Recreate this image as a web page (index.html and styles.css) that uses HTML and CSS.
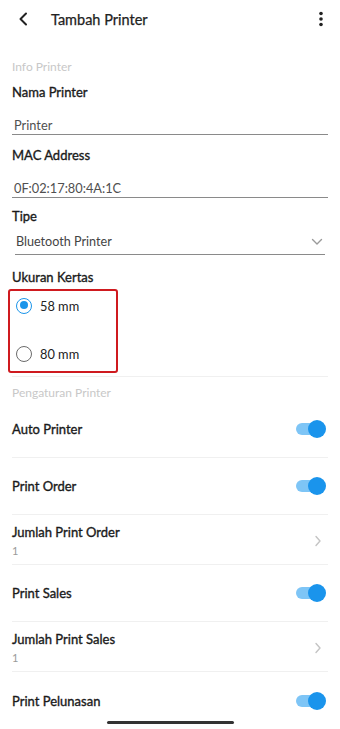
FILE: index.html
```html
<!DOCTYPE html>
<html lang="id">
<head>
<meta charset="utf-8">
<link rel="stylesheet" href="styles.css">
</head>
<body>
<div class="screen">
  <header class="appbar">
    <svg class="back" width="12" height="14" viewBox="0 0 12 14"><path d="M8 1.5 L2.5 7 L8 12.5" fill="none" stroke="#222" stroke-width="2" stroke-linecap="round" stroke-linejoin="round"/></svg>
    <div class="title">Tambah Printer</div>
    <svg class="kebab" width="6" height="16" viewBox="0 0 6 16"><circle cx="3" cy="2.5" r="1.8" fill="#222"/><circle cx="3" cy="8" r="1.8" fill="#222"/><circle cx="3" cy="13.5" r="1.8" fill="#222"/></svg>
  </header>

  <main class="content">
    <div class="section-title first">Info Printer</div>

    <div class="field">
      <div class="label">Nama Printer</div>
      <div class="input">Printer</div>
    </div>
    <div class="field">
      <div class="label label-mac">MAC Address</div>
      <div class="input">0F:02:17:80:4A:1C</div>
    </div>
    <div class="field">
      <div class="label label-tipe">Tipe</div>
      <div class="select">
        <span>Bluetooth Printer</span>
        <svg width="12" height="8" viewBox="0 0 12 8"><path d="M1.5 1.5 L6 6 L10.5 1.5" fill="none" stroke="#9a9a9a" stroke-width="1.4" stroke-linecap="round" stroke-linejoin="round"/></svg>
      </div>
    </div>

    <div class="label label-paper">Ukuran Kertas</div>
    <div class="radio-box">
      <div class="radio on"><span class="dot"></span><span>58 mm</span></div>
      <div class="radio"><span class="dot"></span><span>80 mm</span></div>
    </div>

    <div class="divider"></div>
    <div class="section-title second">Pengaturan Printer</div>

    <div class="row toggle-row"><span class="row-title">Auto Printer</span><span class="switch"></span></div>
    <div class="row toggle-row"><span class="row-title">Print Order</span><span class="switch"></span></div>
    <div class="row nav-row">
      <div class="nav-text"><span class="row-title">Jumlah Print Order</span><span class="sub">1</span></div>
      <svg width="8" height="12" viewBox="0 0 8 12"><path d="M2 1.5 L6 6 L2 10.5" fill="none" stroke="#c4c4c4" stroke-width="1.4" stroke-linecap="round" stroke-linejoin="round"/></svg>
    </div>
    <div class="row toggle-row"><span class="row-title">Print Sales</span><span class="switch"></span></div>
    <div class="row nav-row">
      <div class="nav-text"><span class="row-title">Jumlah Print Sales</span><span class="sub">1</span></div>
      <svg width="8" height="12" viewBox="0 0 8 12"><path d="M2 1.5 L6 6 L2 10.5" fill="none" stroke="#c4c4c4" stroke-width="1.4" stroke-linecap="round" stroke-linejoin="round"/></svg>
    </div>
    <div class="row toggle-row last"><span class="row-title">Print Pelunasan</span><span class="switch"></span></div>
  </main>
  <div class="home-indicator"></div>
</div>
</body>
</html>
```

FILE: styles.css
```css
* { box-sizing: border-box; }
html, body { margin: 0; padding: 0; background: #fff; }
body {
  font-family: Lato, "Noto Sans", sans-serif;
  color: #1f1f1f;
  width: 340px;
  height: 729px;
  overflow: hidden;
}
.screen { position: relative; width: 340px; height: 729px; overflow: hidden; }

.appbar {
  height: 40px;
  display: flex;
  align-items: center;
  padding: 0 16px;
}
.back { margin-left: 2px; margin-top: -2px; }
.title {
  margin-left: 21px;
  font-size: 14.5px;
  font-weight: 400;
  -webkit-text-stroke: 0.25px #222;
  color: #222;
  flex: 1;
  margin-top: -2px;
}
.kebab { margin-top: -2px; }

.content { padding: 0 12px; }

.section-title {
  font-size: 12px;
  color: #c8c8c8;
  line-height: 16px;
}
.section-title.first { margin-top: 19px; }
.section-title.second { margin-top: 8px; }

.label {
  font-size: 13px;
  font-weight: 400;
  -webkit-text-stroke: 0.35px #1a1a1a;
  color: #1a1a1a;
  line-height: 18px;
  margin-top: 8px;
}
.label-mac { margin-top: 11px; }
.label-tipe { margin-top: 9px; }
.label-paper { margin-top: 13px; }

.input {
  margin-top: 16px;
  font-size: 12.8px;
  color: #505050;
  padding: 0 2px 1px 2px;
  line-height: 16px;
  border-bottom: 1px solid #8a8a8a;
}

.select {
  margin: 9px 3px 0 3px;
  display: flex;
  justify-content: space-between;
  align-items: center;
  font-size: 12.6px;
  color: #444;
  line-height: 16px;
  padding: 0 1px 4px 1px;
  border-bottom: 1px solid #8a8a8a;
}
.select svg { margin-right: 1px; }

.radio-box {
  margin-top: 3px;
  margin-left: -4px;
  width: 110px;
  height: 84px;
  border: 2.5px solid #cf1a1f;
  border-radius: 3px;
  padding: 5.5px 0 0 6px;
  display: flex;
  flex-direction: column;
  gap: 30px;
}
.radio {
  display: flex;
  align-items: center;
  gap: 8px;
  font-size: 12.8px;
  color: #222;
  height: 18px;
}
.radio .dot {
  width: 16px;
  height: 16px;
  border-radius: 50%;
  border: 1.5px solid #6b6b6b;
  display: inline-block;
  position: relative;
}
.radio.on .dot { border-color: #1b95ea; }
.radio.on .dot::after {
  content: "";
  position: absolute;
  left: 2.5px; top: 2.5px;
  width: 8px; height: 8px;
  border-radius: 50%;
  background: #1b95ea;
}

.divider { height: 1px; background: #f0f0f0; margin-top: 3px; }

.row {
  display: flex;
  align-items: center;
  justify-content: space-between;
  border-bottom: 1px solid #f0f0f0;
}
.toggle-row { height: 57px; }
.nav-row { height: 50px; padding-top: 2px; }
.row.last { border-bottom: none; }
.row-title {
  font-size: 13px;
  font-weight: 400;
  -webkit-text-stroke: 0.35px #1a1a1a;
  color: #1a1a1a;
}
.nav-text { display: flex; flex-direction: column; gap: 4px; }
.sub { font-size: 11px; color: #9a9a9a; }
.nav-row svg { margin-right: 6px; }

.switch {
  position: relative;
  width: 30px;
  height: 18px;
  margin-right: 2px;
}
.switch::before {
  content: "";
  position: absolute;
  left: 0; top: 3px;
  width: 24px; height: 12px;
  border-radius: 6px;
  background: #7ec5f6;
}
.switch::after {
  content: "";
  position: absolute;
  right: 0; top: 0;
  width: 18px; height: 18px;
  border-radius: 50%;
  background: #1a94ec;
}

.home-indicator {
  position: absolute;
  left: 107px;
  bottom: 5px;
  width: 127px;
  height: 3px;
  border-radius: 2px;
  background: #333;
}
```
